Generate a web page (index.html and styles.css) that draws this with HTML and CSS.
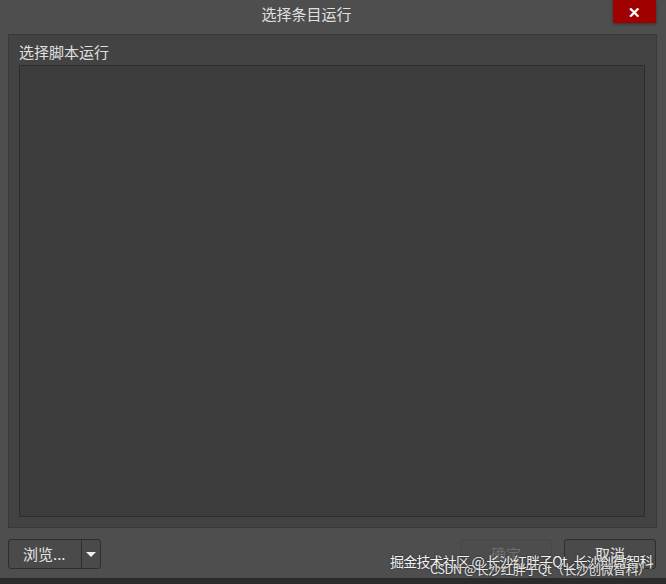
FILE: index.html
```html
<!DOCTYPE html>
<html lang="zh-CN">

<head>
    <meta charset="UTF-8">
    <title>选择条目运行</title>
    <link rel="stylesheet" href="styles.css">
</head>

<body>

    <div class="window">
        <div class="titlebar">
            <div class="title">选择条目运行</div>
            <div class="close">✕</div>
        </div>

        <div class="group">
            <div class="group-label">选择脚本运行</div>
            <div class="list"></div>
        </div>

        <div class="footer">
            <div class="split-btn">
                <div class="split-main">浏览...</div>
                <div class="split-arrow"><span class="tri"></span></div>
            </div>
            <div class="spacer"></div>
            <div class="btn disabled">确定</div>
            <div class="btn">取消</div>
        </div>

        <div class="watermark">
            <div class="wm1">掘金技术社区 @ 长沙红胖子Qt_长沙创微智科</div>
            <div class="wm2">CSDN @长沙红胖子Qt（长沙创微智科）</div>
        </div>
    </div>
    <div class="bottom-strip"></div>

</body>

</html>
```

FILE: styles.css
```css
body {
    margin: 0;
    background-color: #2b2b2b;
    font-family: "Noto Sans CJK SC", "Liberation Sans", sans-serif;
    color: #dcdcdc;
}

.window {
    position: relative;
    width: 666px;
    height: 578px;
    background-color: #4e4e4e;
    display: flex;
    flex-direction: column;
}

/* title bar */
.titlebar {
    height: 34px;
    display: flex;
    align-items: flex-start;
}

.title {
    flex: 1;
    text-align: center;
    font-size: 15px;
    line-height: 28px;
    color: #e0e0e0;
}

.close {
    width: 43px;
    height: 23px;
    margin-right: 10px;
    background-color: #a10000;
    color: #fff;
    font-size: 15px;
    font-weight: bold;
    line-height: 23px;
    text-align: center;
    box-shadow: 0 1px 3px rgba(0, 0, 0, 0.4);
}

/* group box */
.group {
    margin: 0 9px 0 8px;
    height: 494px;
    box-sizing: border-box;
    background-color: #434343;
    border: 1px solid #393939;
    padding: 4px 11px 10px 10px;
    display: flex;
    flex-direction: column;
}

.group-label {
    font-size: 15px;
    line-height: 26px;
    color: #e0e0e0;
}

.list {
    flex: 1;
    background-color: #3d3d3d;
    border: 1px solid #2c2c2c;
}

/* footer buttons */
.footer {
    display: flex;
    align-items: center;
    padding: 11px 10px 0 8px;
    gap: 12px;
}

.spacer {
    flex: 1;
}

.split-btn {
    display: flex;
    width: 93px;
    height: 30px;
    box-sizing: border-box;
    border: 1px solid #2e2e2e;
    border-radius: 3px;
    background-color: #4a4a4a;
}

.split-main {
    width: 73px;
    font-size: 15px;
    line-height: 28px;
    padding-left: 14px;
    box-sizing: border-box;
    color: #e6e6e6;
    border-right: 1px solid #2e2e2e;
}

.split-arrow {
    flex: 1;
    display: flex;
    align-items: center;
    justify-content: center;
}

.tri {
    width: 0;
    height: 0;
    border-left: 5px solid transparent;
    border-right: 5px solid transparent;
    border-top: 5px solid #f0f0f0;
}

.btn {
    width: 92px;
    height: 30px;
    box-sizing: border-box;
    border: 1px solid #2e2e2e;
    border-radius: 3px;
    background-color: #4a4a4a;
    font-size: 15px;
    line-height: 28px;
    text-align: center;
    color: #e6e6e6;
}

.btn.disabled {
    border-color: #474747;
    background-color: #4d4d4d;
    color: #6e6e6e;
}

.bottom-strip {
    height: 6px;
    background-color: #2b2b2b;
}

/* watermark overlay */
.watermark {
    position: absolute;
    left: 390px;
    top: 554px;
    white-space: nowrap;
    color: #f2f2f2;
    text-shadow: 0 0 2px #222;
    pointer-events: none;
}

.wm1 {
    font-size: 14px;
    line-height: 14px;
    letter-spacing: -0.8px;
}

.wm2 {
    margin-left: 40px;
    margin-top: -6px;
    font-size: 13px;
    line-height: 14px;
    letter-spacing: -0.6px;
    color: #e8e8e8;
}
```
